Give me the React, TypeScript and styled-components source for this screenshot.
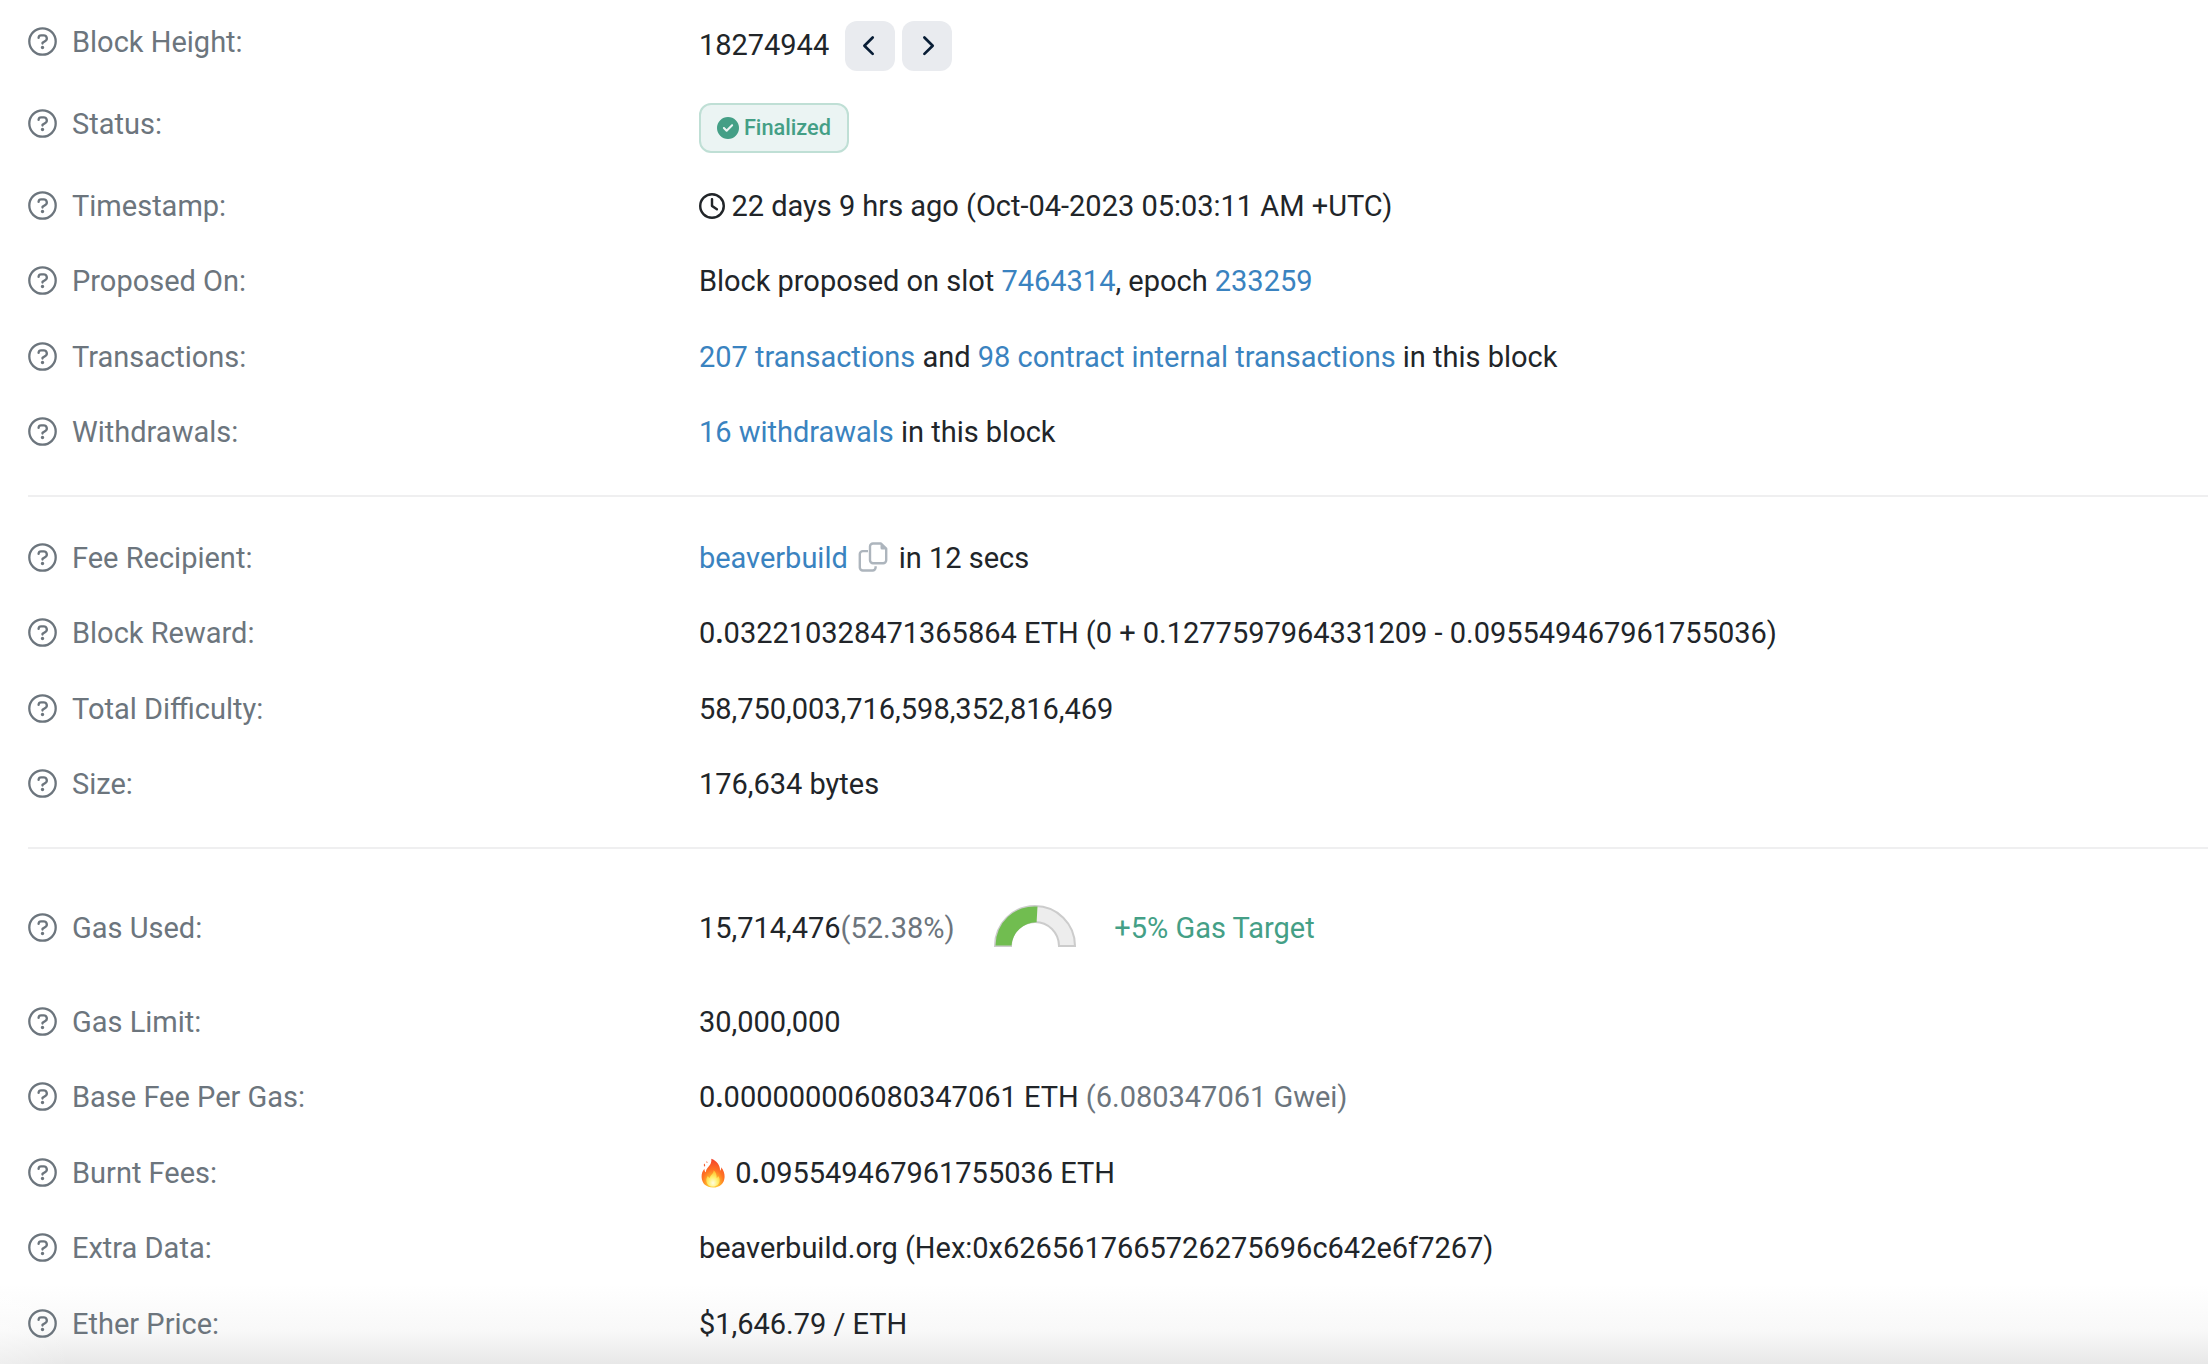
import React, { ReactNode } from "react";
import styled, { createGlobalStyle } from "styled-components";
import { FaCircleCheck, FaRegClock } from "react-icons/fa6";

const GlobalStyle = createGlobalStyle`
  *, *::before, *::after { box-sizing: border-box; }
  html, body { margin: 0; height: 1364px; overflow: hidden; background: #fff; }
  body { font: 400 29px/42.9px Roboto, sans-serif; color: #212529; }
`;

const Page = styled.main`
  height: 1364px;
  padding: 20.5px 0 0 28px;
  overflow: hidden;
  background:
    linear-gradient(to right, rgba(255, 255, 255, 0.3), rgba(255, 255, 255, 0) 70px),
    linear-gradient(to bottom, #fff 1284px, #f8f8f8 1332px, #e8e8e8 1364px);
`;

const Section = styled.section`
  display: flex;
  flex-direction: column;
  gap: 32px;
  & + & {
    margin-top: 40px;
    padding-top: 40px;
    border-top: 2px solid #efeff0;
  }
`;

const Row = styled.div<{ $height?: number; $center?: boolean }>`
  display: grid;
  grid-template-columns: 670.9px 1fr;
  align-items: ${(p) => (p.$center ? "center" : "start")};
  height: ${(p) => p.$height ?? 43.5}px;
  padding-bottom: ${(p) => (p.$center ? 1 : 0)}px;
`;

const Label = styled.div`
  display: flex;
  align-items: center;
  gap: 15px;
  color: #6c757d;
`;

const HelpIcon = styled.svg`
  display: block;
  flex: none;
  width: 29px;
  height: 29px;
  margin-bottom: 1.4px;
`;

const Value = styled.div`
  display: flex;
  align-items: center;
  white-space: pre;
  letter-spacing: -0.012px;
`;

const Link = styled.a`
  color: #3a83c0;
`;

const Muted = styled.span`
  color: #6c757d;
`;

const BoldDot = styled.b`
  font-weight: 700;
`;

const Height = styled.span`
  padding-bottom: 1px;
`;

const Buttons = styled.div`
  display: flex;
  gap: 7px;
  margin-left: 16px;
`;

const NavButton = styled.button`
  display: grid;
  place-items: center;
  width: 50px;
  height: 50px;
  padding: 0;
  border: 0;
  border-radius: 12px;
  background: #e9ebef;
  color: #081d35;
`;

const Badge = styled.span`
  display: flex;
  align-items: center;
  gap: 5px;
  height: 50px;
  padding: 0 16.5px 0 16px;
  border: 2px solid #bfdfd5;
  border-radius: 12px;
  background: #ebf4f3;
  color: #449f86;
  font-size: 21.75px;
  font-weight: 500;
  line-height: 44px;
`;

const Icon = styled.svg<{ $left?: number; $right?: number; $lift?: number }>`
  display: block;
  flex: none;
  margin: 0 ${(p) => p.$right ?? 0}px ${(p) => p.$lift ?? 0}px ${(p) => p.$left ?? 0}px;
`;

const Target = styled.span`
  color: #449f86;
`;

const Help = () => (
  <HelpIcon viewBox="0 0 29 29" fill="none" stroke="currentColor" strokeWidth="2.3" strokeLinecap="round" strokeLinejoin="round">
    <circle cx="14.5" cy="14.5" r="13.2" />
    <path d="M10.6 10.9v-.2a2.5 2.5 0 0 1 2.5-2.3h2.7a3 3 0 0 1 1.5 5.6l-2.8 1.7v.9" />
    <circle cx="14.5" cy="20.5" r="1.65" fill="currentColor" stroke="none" />
  </HelpIcon>
);

const Chevron = ({ right }: { right?: boolean }) => (
  <Icon width="24" height="24" viewBox="0 0 24 24" fill="none" stroke="currentColor" strokeWidth="2.7" strokeLinecap="round" strokeLinejoin="round">
    <path d={right ? "M9.4 3.5 17.7 11.7 9.4 19.9" : "M14.7 3.5 6.4 11.7 14.7 19.9"} />
  </Icon>
);

const Clock = () => <Icon as={FaRegClock} size={26} $right={6.5} />;

const Copy = () => (
  <Icon $left={10} $right={11} $lift={2} width="30" height="30" viewBox="0 0 30 30" fill="none" stroke="#adb5bd" strokeWidth="2.4" strokeLinejoin="round">
    <path d="M10 9.1H4.8a3 3 0 0 0-3 3v13.4a3 3 0 0 0 3 3H14.6a3 3 0 0 0 3-3v-1.2" />
    <path d="M15 1.5h8l5.2 5.2v11.6a3 3 0 0 1-3 3H15a3 3 0 0 1-3-3V4.5a3 3 0 0 1 3-3Z" />
    <path d="M22.5.9v5a1.6 1.6 0 0 0 1.6 1.6h4.8Z" fill="#adb5bd" stroke="none" />
  </Icon>
);

const Gauge = () => (
  <Icon $left={39.2} $right={38.5} $lift={5} width="82" height="42" viewBox="0 0 82 42">
    <path d="M1 41A40 40 0 0 1 81 41H65A24 24 0 0 0 17 41Z" fill="#ededed" stroke="#ccc" strokeWidth="2" />
    <path d="M1.5 40.5A39 39 0 0 1 43.5 1.5L42.6 17.2A25 25 0 0 0 17.5 40.5Z" fill="#71bd50" />
  </Icon>
);

const Fire = () => (
  <Icon $left={2} $right={10.3} width="24" height="30" viewBox="0 0 24 30">
    <defs>
      <radialGradient id="flame" cx="0.5" cy="0.88" r="0.85">
        <stop offset="0" stopColor="#ffe85a" />
        <stop offset="0.3" stopColor="#ffb52a" />
        <stop offset="0.58" stopColor="#ff7423" />
        <stop offset="1" stopColor="#f5432c" />
      </radialGradient>
      <radialGradient id="core" cx="0.5" cy="0.78" r="0.7">
        <stop offset="0" stopColor="#fffde0" />
        <stop offset="0.5" stopColor="#ffef6e" />
        <stop offset="1" stopColor="#ffc02f" />
      </radialGradient>
    </defs>
    <path d="M10.3.8C15.7 2.6 19.5 7.6 19 12.8c1-.7 1.3-2 1.2-3.5 2.4 3 3.5 6.3 3.4 9.6C23.3 25.5 18.7 29.5 12 29.5S.8 25.4.6 19c-.1-3.3 1-6.2 2.8-8.2.1 1.7.5 2.8 1.5 3.5C5 10 8.4 8.5 9.8 5.2 10.4 3.7 10.5 2.3 10.3.8Z" fill="url(#flame)" />
    <path d="M12.6 12.2c.5 3-3.3 4.9-4 7.8-1-.5-1.5-1.3-1.6-2.3-1.3 1.5-1.9 3.2-1.7 5 .4 3.9 3 5.9 6.7 5.9s6.5-2.2 6.7-6c.1-1.8-.5-3.5-1.6-4.7-.2 1-.7 1.6-1.4 2 .1-3.1-.8-5.9-3.1-7.7Z" fill="url(#core)" />
    <path d="M3.2 5.5c1 .9 1.3 2.1.6 3.2-1.1-.7-1.3-1.9-.6-3.2ZM5.5 3.3c.8.3 1.1 1 .9 1.8-.9-.2-1.2-.9-.9-1.8Z" fill="#f65a2a" />
  </Icon>
);

interface DetailProps {
  label: string;
  height?: number;
  center?: boolean;
  children: ReactNode;
}

const Detail = ({ label, height, center, children }: DetailProps) => (
  <Row $height={height} $center={center}>
    <Label>
      <Help />
      {label}
    </Label>
    <Value>{children}</Value>
  </Row>
);

export default function App() {
  return (
    <>
      <GlobalStyle />
      <Page>
        <Section>
          <Detail label="Block Height:" height={50}>
            <Height>18274944</Height>
            <Buttons>
              <NavButton aria-label="Previous block"><Chevron /></NavButton>
              <NavButton aria-label="Next block"><Chevron right /></NavButton>
            </Buttons>
          </Detail>
          <Detail label="Status:" height={50}>
            <Badge><FaCircleCheck size={22} />Finalized</Badge>
          </Detail>
          <Detail label="Timestamp:"><Clock />22 days 9 hrs ago (Oct-04-2023 05:03:11 AM +UTC)</Detail>
          <Detail label="Proposed On:">
            <span>Block proposed on slot <Link>7464314</Link>, epoch <Link>233259</Link></span>
          </Detail>
          <Detail label="Transactions:">
            <span><Link>207 transactions</Link> and <Link>98 contract internal transactions</Link> in this block</span>
          </Detail>
          <Detail label="Withdrawals:"><span><Link>16 withdrawals</Link> in this block</span></Detail>
        </Section>
        <Section>
          <Detail label="Fee Recipient:"><Link>beaverbuild</Link><Copy />in 12 secs</Detail>
          <Detail label="Block Reward:">
            <span>0<BoldDot>.</BoldDot>032210328471365864 ETH (0 + 0.1277597964331209 - 0.095549467961755036)</span>
          </Detail>
          <Detail label="Total Difficulty:">58,750,003,716,598,352,816,469</Detail>
          <Detail label="Size:">176,634 bytes</Detail>
        </Section>
        <Section>
          <Detail label="Gas Used:" height={80} center>
            15,714,476<Muted>(52.38%)</Muted><Gauge /><Target>+5% Gas Target</Target>
          </Detail>
          <Detail label="Gas Limit:">30,000,000</Detail>
          <Detail label="Base Fee Per Gas:">
            <span>0<BoldDot>.</BoldDot>000000006080347061 ETH <Muted>(6.080347061 Gwei)</Muted></span>
          </Detail>
          <Detail label="Burnt Fees:"><Fire /><span>0<BoldDot>.</BoldDot>095549467961755036 ETH</span></Detail>
          <Detail label="Extra Data:">beaverbuild.org (Hex:0x6265617665726275696c642e6f7267)</Detail>
          <Detail label="Ether Price:">$1,646.79 / ETH</Detail>
        </Section>
      </Page>
    </>
  );
}
